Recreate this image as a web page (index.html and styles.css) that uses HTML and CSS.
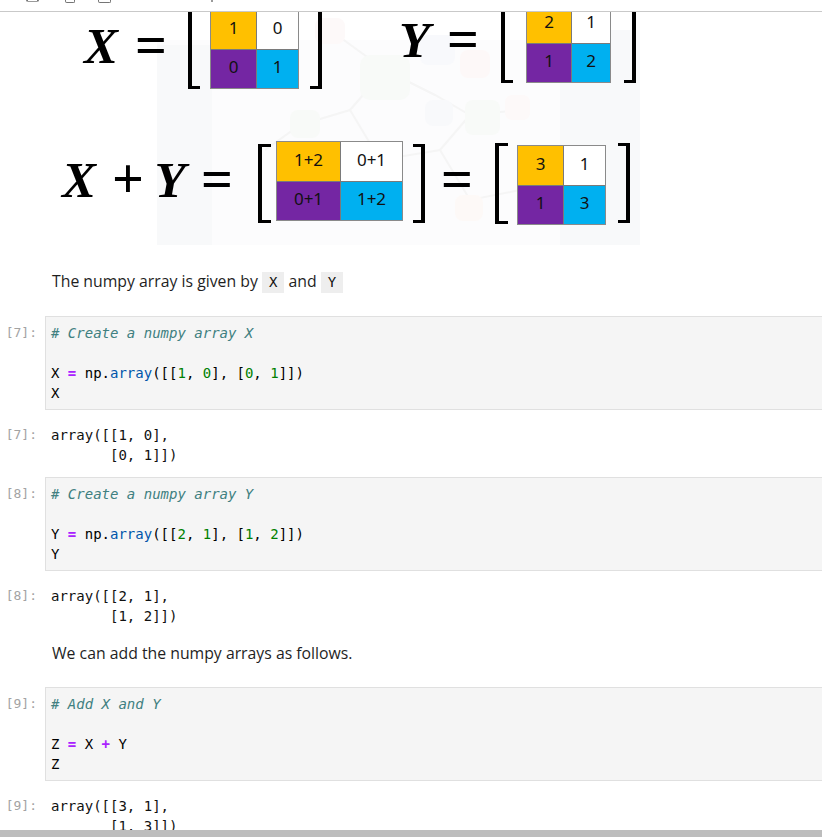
FILE: index.html
```html
<!DOCTYPE html>
<html>
<head>
<meta charset="utf-8">
<link rel="stylesheet" href="styles.css">
</head>
<body>
<div class="toolbar">
  <span class="tb-icon tb-cut"></span>
  <span class="tb-icon tb-copy"></span>
  <span class="tb-icon tb-paste"></span>
  <span class="tb-icon tb-dot"></span>
</div>
<div class="notebook">
  <div class="figure">
    <svg class="watermark" width="640" height="245" viewBox="0 0 640 245">
      <rect x="157" y="40" width="483" height="205" fill="#fcfcfd"/>
      <rect x="157" y="45" width="55" height="200" fill="#f8f9fa"/>
      <rect x="560" y="30" width="80" height="215" fill="#f8f9fa"/>
      <g stroke="#f5f5f5" stroke-width="2" fill="none">
        <path d="M330 30 L385 70 L350 110 L300 125 L265 150"/>
        <path d="M385 70 L435 95 L470 115 L520 110"/>
        <path d="M350 110 L380 160 L440 150 L470 115"/>
        <path d="M440 150 L470 200 L520 190"/>
      </g>
      <rect x="315" y="18" width="30" height="26" rx="8" fill="#fdf9f9"/>
      <rect x="360" y="55" width="50" height="45" rx="10" fill="#f8faf8"/>
      <rect x="420" y="35" width="35" height="30" rx="8" fill="#f8f9fc"/>
      <rect x="460" y="50" width="30" height="28" rx="8" fill="#fdf8f8"/>
      <rect x="290" y="110" width="30" height="28" rx="8" fill="#f8faf8"/>
      <rect x="425" y="100" width="28" height="26" rx="8" fill="#f8f9fb"/>
      <rect x="465" y="100" width="35" height="35" rx="8" fill="#f8faf8"/>
      <rect x="505" y="95" width="25" height="25" rx="7" fill="#fdf9f9"/>
      <rect x="370" y="190" width="30" height="28" rx="8" fill="#f8faf8"/>
      <rect x="455" y="195" width="28" height="26" rx="8" fill="#fdf9f7"/>
    </svg>

    <div class="eq-row row1">
      <div class="group g1">
        <span class="mi x1">X</span>
        <span class="mo eq1">=</span>
        <span class="br brl bx1l"></span>
        <div class="mat mx1">
          <span class="c yel">1</span><span class="c wht">0</span>
          <span class="c pur">0</span><span class="c blu">1</span>
        </div>
        <span class="br brr bx1r"></span>
      </div>
      <div class="group g2">
        <span class="mi y1">Y</span>
        <span class="mo eq2">=</span>
        <span class="br brl by1l"></span>
        <div class="mat my1">
          <span class="c yel">2</span><span class="c wht">1</span>
          <span class="c pur">1</span><span class="c blu">2</span>
        </div>
        <span class="br brr by1r"></span>
      </div>
    </div>

    <div class="eq-row row2">
      <span class="mi x2">X</span>
      <span class="mo plus">+</span>
      <span class="mi y2">Y</span>
      <span class="mo eq3">=</span>
      <span class="br brl b2l"></span>
      <div class="mat msum">
        <span class="c yel">1+2</span><span class="c wht">0+1</span>
        <span class="c pur">0+1</span><span class="c blu">1+2</span>
      </div>
      <span class="br brr b2r"></span>
      <span class="mo eq4">=</span>
      <span class="br brl b3l"></span>
      <div class="mat mres">
        <span class="c yel">3</span><span class="c wht">1</span>
        <span class="c pur">1</span><span class="c blu">3</span>
      </div>
      <span class="br brr b3r"></span>
    </div>
  </div>

  <p class="md">The numpy array is given by <code class="ic">X</code> and <code class="ic">Y</code></p>

  <div class="row">
    <div class="prompt in">[7]:</div>
    <div class="cell"><div class="ln cm"># Create a numpy array X</div><div class="ln">&nbsp;</div><div class="ln">X <span class="op">=</span> np.<span class="pr">array</span>([[<span class="nu">1</span>, <span class="nu">0</span>], [<span class="nu">0</span>, <span class="nu">1</span>]])</div><div class="ln">X</div></div>
  </div>
  <div class="row out">
    <div class="prompt">[7]:</div>
    <div class="output"><div class="ln">array([[1, 0],</div><div class="ln">       [0, 1]])</div></div>
  </div>

  <div class="row">
    <div class="prompt in">[8]:</div>
    <div class="cell"><div class="ln cm"># Create a numpy array Y</div><div class="ln">&nbsp;</div><div class="ln">Y <span class="op">=</span> np.<span class="pr">array</span>([[<span class="nu">2</span>, <span class="nu">1</span>], [<span class="nu">1</span>, <span class="nu">2</span>]])</div><div class="ln">Y</div></div>
  </div>
  <div class="row out before-md">
    <div class="prompt">[8]:</div>
    <div class="output"><div class="ln">array([[2, 1],</div><div class="ln">       [1, 2]])</div></div>
  </div>

  <p class="md">We can add the numpy arrays as follows.</p>

  <div class="row">
    <div class="prompt in">[9]:</div>
    <div class="cell"><div class="ln cm"># Add X and Y</div><div class="ln">&nbsp;</div><div class="ln">Z <span class="op">=</span> X <span class="op">+</span> Y</div><div class="ln">Z</div></div>
  </div>
  <div class="row out">
    <div class="prompt">[9]:</div>
    <div class="output"><div class="ln">array([[3, 1],</div><div class="ln">       [1, 3]])</div></div>
  </div>
</div>
<div class="hscroll"></div>
</body>
</html>
```

FILE: styles.css
```css
html, body {
  margin: 0;
  padding: 0;
  background: #ffffff;
  width: 822px;
  height: 837px;
  overflow: hidden;
}

/* ---------- top toolbar (mostly scrolled off) ---------- */
.toolbar {
  height: 11px;
  border-bottom: 1px solid #c9c9c9;
  display: flex;
  align-items: flex-end;
  overflow: hidden;
  background: #fff;
}
.tb-icon {
  display: block;
  flex: none;
  align-self: flex-start;
  box-sizing: border-box;
}
.tb-cut {
  margin-left: 26px;
  width: 13px;
  height: 2px;
  border-left: 2px solid #757575;
  border-right: 2px solid #757575;
  border-bottom: 1px solid #9a9a9a;
  border-radius: 0 0 3px 3px;
}
.tb-copy {
  margin-left: 26px;
  width: 10px;
  height: 3px;
  border: 1.5px solid #757575;
  border-top: none;
  border-radius: 0 0 2px 2px;
}
.tb-paste {
  margin-left: 23px;
  width: 13px;
  height: 3px;
  border: 1.5px solid #757575;
  border-top: none;
  border-radius: 0 0 2px 2px;
}
.tb-dot {
  margin-left: 100px;
  width: 2px;
  height: 2px;
  background: #9a9a9a;
}

/* ---------- notebook scroll area ---------- */
.notebook {
  height: 818px;
  overflow: hidden;
}

/* ---------- figure (embedded image) ---------- */
.figure {
  position: relative;
  width: 640px;
  height: 245px;
  margin-top: -12px;
}
.watermark {
  position: absolute;
  left: 0;
  top: 0;
}
.eq-row {
  position: relative;
  display: flex;
}
.row1 {
  height: 89px;
  align-items: flex-start;
}
.group {
  display: flex;
  align-items: center;
  height: 80px;
}
.g1 { margin-top: 9px; }
.g2 { margin-top: 3px; }
.row2 {
  margin-top: 52px;
  height: 84px;
  align-items: center;
}

.mi, .mo {
  display: block;
  flex: none;
  font-family: "Liberation Serif", "DejaVu Serif", serif;
  line-height: 50px;
  text-align: center;
  color: #000;
}
.mi {
  font-size: 51px;
  font-weight: bold;
  font-style: italic;
  width: 42px;
  margin-bottom: 6px;
}
.mo {
  font-size: 56px;
  font-weight: bold;
  width: 32px;
  margin-bottom: 8px;
}
.x1  { margin-left: 80px; }
.eq1 { margin-left: 13px; }
.y1  { margin-left: 72px; width: 41px; }
.eq2 { margin-left: 12px; }
.x2  { margin-left: 58px; }
.plus { margin-left: 12px; width: 28px; }
.y2  { margin-left: 9px; }
.eq3 { margin-left: 10px; }
.eq4 { margin-left: 16px; }

/* brackets */
.br {
  display: block;
  flex: none;
  box-sizing: border-box;
  width: 12px;
  border-top: 3px solid #000;
  border-bottom: 3px solid #000;
}
.brl { border-left: 4px solid #000; }
.brr { border-right: 4px solid #000; }

.bx1l { margin-left: 21px; height: 80px; }
.bx1r { margin-left: 11px; height: 80px; }
.by1l { margin-left: 22px; height: 80px; }
.by1r { margin-left: 13px; height: 80px; }
.b2l  { margin-left: 25px; height: 79px; width: 13px; }
.b2r  { margin-left: 10px; height: 79px; }
.b3l  { margin-left: 22px; height: 81px; width: 13px; }
.b3r  { margin-left: 12px; height: 80px; }

/* matrices */
.mat {
  flex: none;
  display: grid;
  grid-template-rows: 1fr 1fr;
  gap: 1px;
  background: #7a7a7a;
  border: 1px solid #8a8a8a;
  box-sizing: border-box;
}
.c {
  display: flex;
  align-items: center;
  justify-content: center;
  padding-bottom: 4px;
  font-family: "Noto Sans", "Open Sans", sans-serif;
  font-size: 17px;
  color: #111;
}
.yel { background: #ffc000; }
.wht { background: #ffffff; }
.pur { background: #7426a3; }
.blu { background: #00b0f0; }

.mx1  { margin-left: 10px; width: 89px; height: 80px; grid-template-columns: 45px 1fr; }
.my1  { margin-left: 13px; width: 85px; height: 80px; grid-template-columns: 44px 1fr; }
.msum { margin-left: 5px; width: 127px; height: 80px; grid-template-columns: 63px 1fr; align-self: flex-start; }
.mres { margin-left: 9px; width: 89px; height: 80px; grid-template-columns: 45px 1fr; align-self: flex-end; }

/* ---------- markdown ---------- */
.md {
  margin: 24px 0 22px;
  padding-left: 52px;
  font-family: "Open Sans", "Noto Sans", sans-serif;
  font-size: 15.8px;
  line-height: 24px;
  color: #1f1f1f;
}
.ic {
  font-family: "DejaVu Sans Mono", monospace;
  font-size: 14px;
  background: #eeeeee;
  padding: 2px 7px 3px;
  color: #111;
}

/* ---------- code cells ---------- */
.row {
  display: flex;
}
.prompt {
  flex: none;
  width: 45px;
  box-sizing: border-box;
  padding: 7px 8px 0 0;
  text-align: right;
  font-family: "DejaVu Sans Mono", monospace;
  font-size: 13px;
  line-height: 20px;
  color: #a3a3a3;
}
.cell {
  flex: 1;
  margin-right: -10px;
  background: #f5f5f5;
  border: 1px solid #e0e0e0;
  padding: 6px 5px;
  font-family: "DejaVu Sans Mono", monospace;
  font-size: 14px;
  line-height: 20px;
  color: #000;
}
.ln {
  height: 20px;
  white-space: pre;
}
.out {
  margin: 15px 0 12px;
}
.out.before-md {
  margin-bottom: 15px;
}
.out + .md { margin-top: 0; }
.out .prompt {
  padding-top: 0;
}
.output {
  padding-left: 6px;
  font-family: "DejaVu Sans Mono", monospace;
  font-size: 14px;
  line-height: 20px;
  color: #111;
}
.cm { color: #408080; font-style: italic; }
.op { color: #aa22ff; font-weight: bold; }
.pr { color: #0055aa; }
.nu { color: #008000; }

/* ---------- horizontal scrollbar ---------- */
.hscroll {
  height: 7px;
  background: #bdbdbd;
}
```
